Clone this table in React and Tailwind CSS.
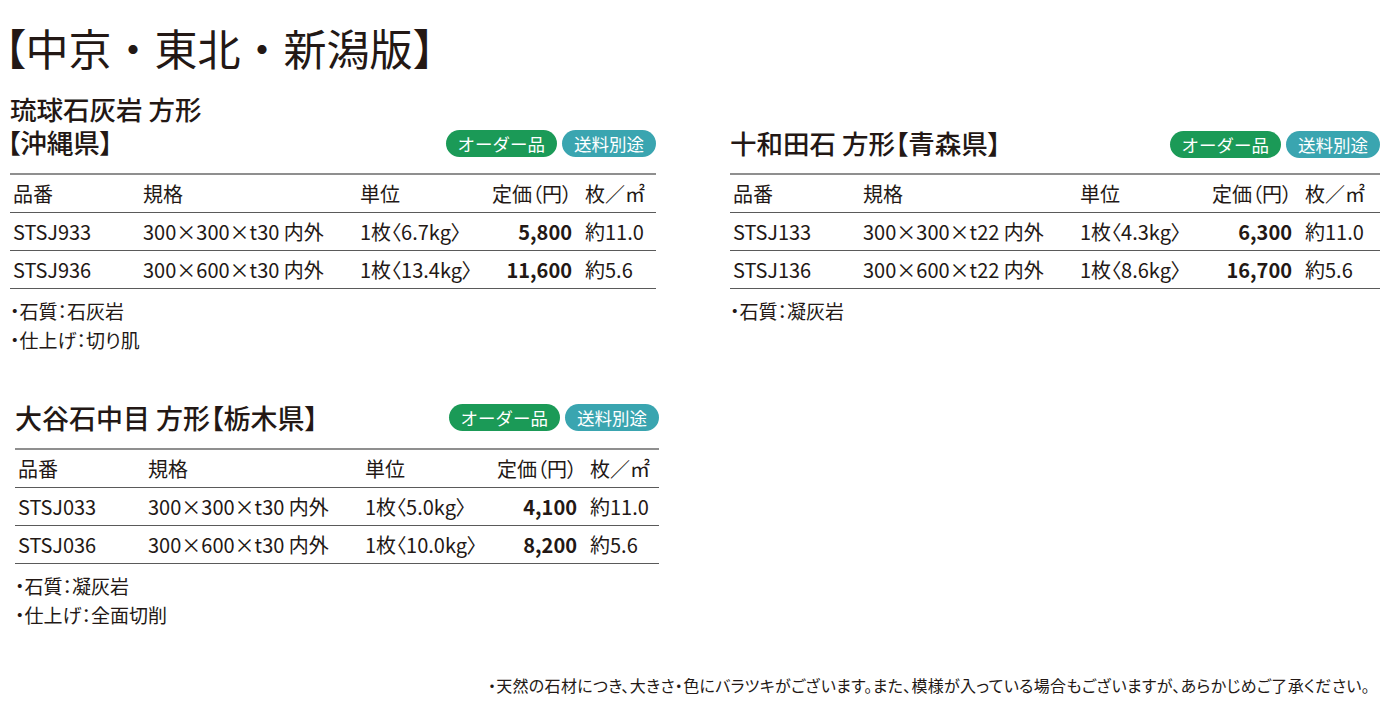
import React from "react";

const font = { fontFamily: '"Noto Sans CJK JP", "Noto Sans", sans-serif' };

const Badge = ({ color, children }) => (
    <span className={`inline-flex h-[27px] items-center rounded-full px-[12px] text-[17.5px] leading-none text-white ${color}`}>
        {children}
    </span>
);

const Badges = () => (
    <div className="flex gap-[5px]">
        <Badge color="bg-[#1b9a57]">オーダー品</Badge>
        <Badge color="bg-[#3aa5b0]">送料別途</Badge>
    </div>
);

const Row = ({ cells, head }) => (
    <div className="grid h-[38px] grid-cols-[130px_217px_130px_82px_84px] items-center border-b border-[#5a5a5a] pl-[3px] text-[20px]">
        <span>{cells[0]}</span>
        <span>{cells[1]}</span>
        <span className="whitespace-nowrap">{cells[2]}</span>
        <span className={`whitespace-nowrap text-right ${head ? "" : "font-bold"}`}>{cells[3]}</span>
        <span className="whitespace-nowrap pl-[13px]">{cells[4]}</span>
    </div>
);

const Table = ({ rows }) => (
    <div className="border-t-2 border-[#8f8f8f] [font-feature-settings:'palt']">
        <Row head cells={["品番", "規格", "単位", "定価（円）", "枚／㎡"]} />
        {rows.map((r) => (
            <Row key={r[0]} cells={r} />
        ))}
    </div>
);

const Notes = ({ items }) => (
    <ul className="mt-[7px] text-[19px] leading-[29px] [font-feature-settings:'palt']">
        {items.map((t) => (
            <li key={t}>・{t}</li>
        ))}
    </ul>
);

export default function App() {
    return (
        <div style={font} className="flex h-[716px] w-[1389px] flex-col bg-white text-[#231815]">
            <h1 className="ml-[4px] mt-[25px] text-[43px] leading-[44px]">
                <span className="[font-feature-settings:'palt']">【</span>中京・東北・新潟版】
            </h1>

            <div className="mt-[23px] flex">
                <div className="ml-[10px] w-[646px]">
                    <div className="flex h-[66px] items-end justify-between">
                        <h2 className="text-[26.5px] font-medium leading-[33px] [font-feature-settings:'palt']">
                            <span className="block">琉球石灰岩 方形</span>
                            <span className="-ml-[3px] block">【沖縄県】</span>
                        </h2>
                        <div className="mb-px">
                            <Badges />
                        </div>
                    </div>
                    <div className="mt-[15px]">
                        <Table
                            rows={[
                                ["STSJ933", "300×300×t30 内外", "1枚〈6.7kg〉", "5,800", "約11.0"],
                                ["STSJ936", "300×600×t30 内外", "1枚〈13.4kg〉", "11,600", "約5.6"],
                            ]}
                        />
                    </div>
                    <Notes items={["石質：石灰岩", "仕上げ：切り肌"]} />
                </div>

                <div className="ml-[74px] w-[650px]">
                    <div className="flex h-[66px] items-end justify-between">
                        <h2 className="text-[26.5px] font-medium leading-[31px] [font-feature-settings:'palt']">
                            十和田石 方形【青森県】
                        </h2>
                        <Badges />
                    </div>
                    <div className="mt-[15px]">
                        <Table
                            rows={[
                                ["STSJ133", "300×300×t22 内外", "1枚〈4.3kg〉", "6,300", "約11.0"],
                                ["STSJ136", "300×600×t22 内外", "1枚〈8.6kg〉", "16,700", "約5.6"],
                            ]}
                        />
                    </div>
                    <Notes items={["石質：凝灰岩"]} />
                </div>
            </div>

            <div className="ml-[15px] mt-[48px] w-[644px]">
                <div className="flex items-center justify-between">
                    <h2 className="text-[27px] font-medium leading-[31px] [font-feature-settings:'palt']">
                        大谷石中目 方形【栃木県】
                    </h2>
                    <Badges />
                </div>
                <div className="mt-[15px]">
                    <Table
                        rows={[
                            ["STSJ033", "300×300×t30 内外", "1枚〈5.0kg〉", "4,100", "約11.0"],
                            ["STSJ036", "300×600×t30 内外", "1枚〈10.0kg〉", "8,200", "約5.6"],
                        ]}
                    />
                </div>
                <Notes items={["石質：凝灰岩", "仕上げ：全面切削"]} />
            </div>

            <p className="mb-[21px] mt-auto pr-[19px] text-right text-[16px] leading-[20px] tracking-[0.3px] [font-feature-settings:'palt']">
                ・天然の石材につき、大きさ・色にバラツキがございます。また、模様が入っている場合もございますが、あらかじめご了承ください。
            </p>
        </div>
    );
}
